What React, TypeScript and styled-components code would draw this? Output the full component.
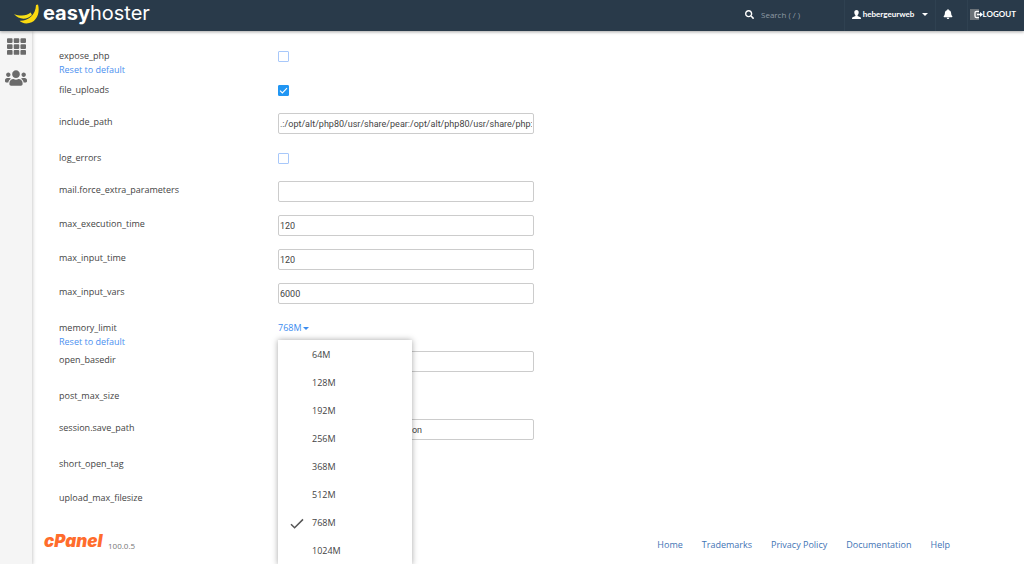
import React from "react";
import styled, { createGlobalStyle } from "styled-components";
import { FaTh, FaUsers, FaSearch, FaBell } from "react-icons/fa";

const GlobalStyle = createGlobalStyle`
  *, *::before, *::after { box-sizing: border-box; }
  body {
    margin: 0;
    background: #fff;
    color: #444;
    font: 9px/14px "Open Sans", "Noto Sans", sans-serif;
  }
  button, input { font: inherit; color: inherit; }
  button { border: 0; padding: 0; background: none; cursor: pointer; }
  a { text-decoration: none; }
`;

const Page = styled.div`
  display: flex;
  flex-direction: column;
  min-height: 100vh;
  overflow: hidden;
`;

const Header = styled.header`
  display: flex;
  align-items: stretch;
  height: 31px;
  padding: 0 8px 0 14px;
  background: #293a4a;
  box-shadow: 0 1px 3px rgba(0, 0, 0, 0.35);
  color: #fff;
  font-size: 8px;
  z-index: 2;
`;

const Brand = styled.a`
  display: flex;
  align-items: center;
  gap: 4px;
  height: 27px;
  margin-right: auto;
  color: #fff;
  font-family: Inter, sans-serif;
  font-size: 20px;
  line-height: 27px;
`;

const SearchBox = styled.label`
  display: flex;
  align-items: center;
  gap: 7px;
  width: 99px;
  height: 29px;
`;

const SearchInput = styled.input`
  width: 64px;
  border: 0;
  padding: 0;
  background: none;
  outline: 0;
  &::placeholder { color: #8f9aa5; opacity: 1; }
`;

const HeaderButton = styled.button<{ $width: number; $gap?: number; $justify?: string }>`
  display: flex;
  flex: none;
  align-items: center;
  justify-content: ${(p) => p.$justify ?? "center"};
  gap: ${(p) => p.$gap ?? 0}px;
  width: ${(p) => p.$width}px;
  padding: 0 0 3px;
  border-left: 1px solid #2f4151;
  font-family: Lato, sans-serif;
  font-weight: 700;
  white-space: nowrap;
`;

const BellButton = styled(HeaderButton)`
  padding-left: 7px;
`;

const Caret = styled.span<{ $spaced?: boolean }>`
  margin-left: ${(p) => (p.$spaced ? 6 : 0)}px;
  border: 3px solid transparent;
  border-top-color: currentColor;
  border-bottom: 0;
`;

const Body = styled.div`
  display: flex;
  flex: 1;
`;

const Sidebar = styled.nav`
  display: flex;
  flex-direction: column;
  align-items: center;
  gap: 11px;
  width: 32px;
  padding-top: 6px;
  background: #f5f5f5;
  box-shadow: 0 0 4px rgba(0, 0, 0, 0.3);
  color: #6b6b6b;
`;

const SideLink = styled.a`
  display: flex;
  color: inherit;
`;

const Content = styled.div`
  display: flex;
  flex: 1;
  flex-direction: column;
  min-width: 0;
`;

const Options = styled.main`
  padding: 8px 27px 0;
`;

const Row = styled.div`
  display: grid;
  grid-template-columns: 219px minmax(0, 256px);
  grid-template-rows: 34px;
`;

const Name = styled.div<{ $raised?: boolean }>`
  padding-top: ${(p) => (p.$raised ? 8 : 10)}px;
`;

const ResetLink = styled.a`
  display: block;
  color: #4a90f0;
`;

const Cell = styled.div<{ $raised?: boolean }>`
  position: relative;
  display: flex;
  align-items: center;
  padding-bottom: ${(p) => (p.$raised ? 2 : 0)}px;
`;

const TextInput = styled.input`
  width: 100%;
  height: 21px;
  padding: 2px 1px 0;
  border: 1px solid #ccc;
  border-radius: 2px;
  background: #fff;
  font-family: Roboto, sans-serif;
`;

const Check = styled.input`
  appearance: none;
  width: 11px;
  height: 11px;
  margin: 0;
  border: 1px solid #a8c8fa;
  border-radius: 1px;
  background: #fff;
  &:checked {
    border-color: #2196f3;
    background: #2196f3;
  }
`;

const CheckMark = styled.svg`
  position: absolute;
  left: 0;
  pointer-events: none;
`;

const Dropdown = styled.button`
  display: flex;
  align-items: center;
  gap: 1px;
  color: #3b8cf0;
`;

const Menu = styled.ul`
  position: absolute;
  top: 29px;
  left: 0;
  z-index: 1;
  width: 134px;
  margin: 0;
  padding: 1px 0 0;
  background: #fff;
  box-shadow: 0 0 6px rgba(0, 0, 0, 0.35);
  list-style: none;
`;

const MenuItem = styled.button`
  display: grid;
  grid-template-columns: 22px 1fr;
  align-items: center;
  width: 100%;
  height: 28px;
  padding-left: 12px;
  text-align: left;
`;

const MenuLabel = styled.span`
  grid-column: 2;
`;

const Footer = styled.footer`
  display: flex;
  justify-content: space-between;
  height: 50px;
  padding: 17px 74px 0 12px;
`;

const Product = styled.div`
  display: flex;
  gap: 4px;
  color: #777;
  font-size: 8px;
`;

const CpanelLogo = styled.svg`
  overflow: visible;
`;

const FooterLinks = styled.nav`
  display: flex;
  gap: 19px;
  padding-top: 6px;
  a { color: #3f74b5; }
`;

const Version = styled.span`
  padding-top: 7px;
`;

type Option = {
  name: string;
  kind: "check" | "text" | "menu" | "none";
  value?: string;
  checked?: boolean;
  reset?: boolean;
};

const options: Option[] = [
  { name: "expose_php", kind: "check", reset: true },
  { name: "file_uploads", kind: "check", checked: true },
  { name: "include_path", kind: "text", value: ".:/opt/alt/php80/usr/share/pear:/opt/alt/php80/usr/share/php:/usr/share/pear" },
  { name: "log_errors", kind: "check" },
  { name: "mail.force_extra_parameters", kind: "text", value: "" },
  { name: "max_execution_time", kind: "text", value: "120" },
  { name: "max_input_time", kind: "text", value: "120" },
  { name: "max_input_vars", kind: "text", value: "6000" },
  { name: "memory_limit", kind: "menu", value: "768M", reset: true },
  { name: "open_basedir", kind: "text", value: "" },
  { name: "post_max_size", kind: "none" },
  { name: "session.save_path", kind: "text", value: "/opt/alt/php80/var/lib/php/session" },
  { name: "short_open_tag", kind: "check" },
  { name: "upload_max_filesize", kind: "none" },
];

const sizes = ["64M", "128M", "192M", "256M", "368M", "512M", "768M", "1024M"];

function Control({ option }: { option: Option }) {
  if (option.kind === "text") {
    return <TextInput id={option.name} type="text" defaultValue={option.value} />;
  }
  if (option.kind === "check") {
    return (
      <>
        <Check id={option.name} type="checkbox" defaultChecked={option.checked} />
        {option.checked && (
          <CheckMark width="11" height="11" viewBox="0 0 11 11" aria-hidden="true">
            <path d="M2 5.6 4.4 8 9 3.2" fill="none" stroke="#fff" strokeWidth="1.1" />
          </CheckMark>
        )}
      </>
    );
  }
  if (option.kind === "menu") {
    return (
      <>
        <Dropdown id={option.name} aria-haspopup="menu" aria-expanded="true">
          {option.value}
          <Caret />
        </Dropdown>
        <Menu>
          {sizes.map((size) => (
            <li key={size}>
              <MenuItem>
                {size === option.value && (
                  <svg width="14" height="12" viewBox="0 0 14 12" aria-hidden="true">
                    <path d="M1 7.2 4.6 10.8 13 2.4" fill="none" stroke="#555" strokeWidth="1.5" />
                  </svg>
                )}
                <MenuLabel>{size}</MenuLabel>
              </MenuItem>
            </li>
          ))}
        </Menu>
      </>
    );
  }
  return null;
}

export default function App() {
  return (
    <Page>
      <GlobalStyle />
      <Header>
        <Brand href="#">
          <svg width="25" height="20" viewBox="0 0 25 20" aria-hidden="true">
            <path d="M0 10C5 12.2 13 12.4 16.6 8.6L18 11C13 16.2 4.6 15.8 0 10Z" fill="#f7e017" />
            <path d="M22 1 24 .6C26.4 9 22.4 19.4 12.4 19.4C9.2 19.4 6.8 18.2 5.6 16.8C13 17.4 21.8 11.6 22 1Z" fill="#fbd90f" />
          </svg>
          <span><b>easy</b>hoster</span>
        </Brand>
        <SearchBox>
          <FaSearch size={9} aria-hidden="true" />
          <SearchInput type="search" placeholder="Search ( / )" aria-label="Search" />
        </SearchBox>
        <HeaderButton $width={91} $gap={2}>
          <svg width="9" height="9" viewBox="0 0 9 9" aria-hidden="true">
            <path d="M4.5 0C6 0 6.8 1 6.7 2.5C6.6 4 6 4.8 5.6 5.1V6L8.4 7.3Q9 7.6 9 9H0Q0 7.6.6 7.3L3.4 6V5.1C3 4.8 2.4 4 2.3 2.5C2.2 1 3 0 4.5 0Z" fill="#fff" />
          </svg>
          hebergeurweb
          <Caret $spaced />
        </HeaderButton>
        <BellButton $width={32} $justify="flex-start" aria-label="Notifications">
          <FaBell size={10} />
        </BellButton>
        <HeaderButton $width={49} $justify="flex-end">
          <svg width="13" height="11" viewBox="0 0 13 11" aria-hidden="true">
            <rect width="9" height="11" fill="#6b7278" />
            <path d="M9 2.4H6.6Q5 2.4 5 4V7Q5 8.6 6.6 8.6H9M7 5.5H11" fill="none" stroke="#fff" strokeWidth="1.3" />
            <path d="M10 3 13 5.5 10 8Z" fill="#fff" />
          </svg>
          LOGOUT
        </HeaderButton>
      </Header>
      <Body>
        <Sidebar aria-label="Main">
          <SideLink href="#" aria-label="Tools"><FaTh size={19} /></SideLink>
          <SideLink href="#" aria-label="User manager"><FaUsers size={22} /></SideLink>
        </Sidebar>
        <Content>
          <Options>
            {options.map((option) => (
              <Row key={option.name}>
                <Name $raised={option.kind === "text"}>
                  <label htmlFor={option.name}>{option.name}</label>
                  {option.reset && <ResetLink href="#">Reset to default</ResetLink>}
                </Name>
                <Cell $raised={option.kind === "text"}>
                  <Control option={option} />
                </Cell>
              </Row>
            ))}
          </Options>
          <Footer>
            <Product>
              <CpanelLogo width="60" height="20" viewBox="0 0 60 20" role="img" aria-label="cPanel">
                <text x="0" y="15" fill="#ff6c2c" fontFamily="Inter" fontSize="17" fontWeight="900" fontStyle="italic">cPanel</text>
              </CpanelLogo>
              <Version>100.0.5</Version>
            </Product>
            <FooterLinks aria-label="Footer">
              <a href="#">Home</a>
              <a href="#">Trademarks</a>
              <a href="#">Privacy Policy</a>
              <a href="#">Documentation</a>
              <a href="#">Help</a>
            </FooterLinks>
          </Footer>
        </Content>
      </Body>
    </Page>
  );
}
